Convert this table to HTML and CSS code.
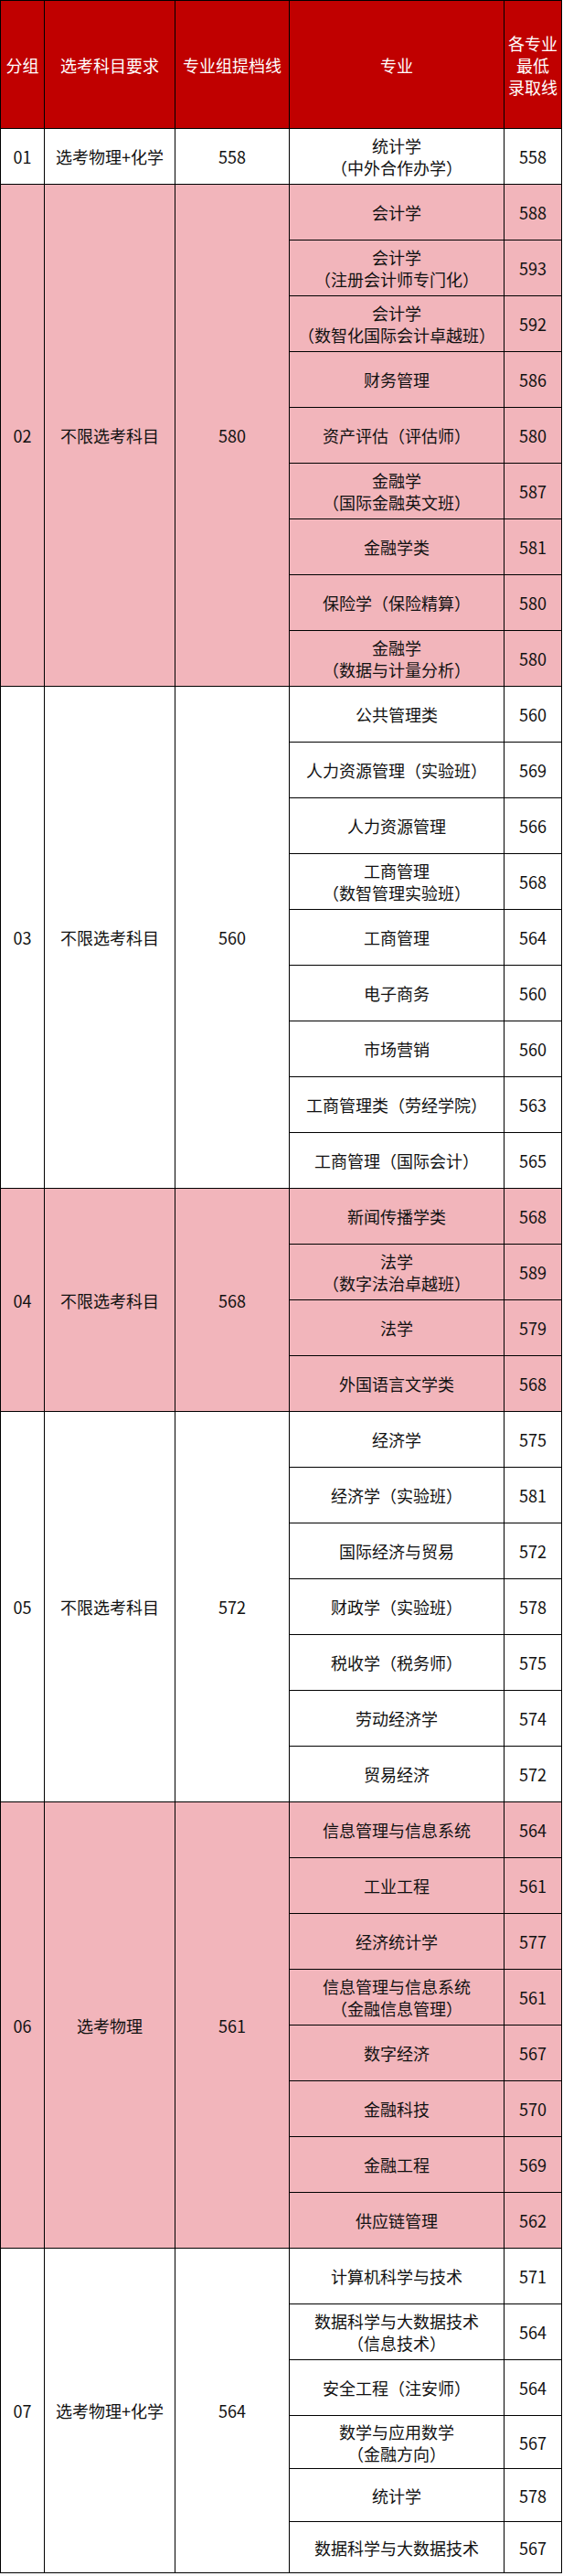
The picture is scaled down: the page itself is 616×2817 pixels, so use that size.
FILE: index.html
```html
<!DOCTYPE html>
<html lang="zh-CN">
<head>
<meta charset="utf-8">
<title>专业组录取线</title>
<link rel="stylesheet" href="styles.css">
</head>
<body>
<table class="score-table">
  <colgroup>
    <col class="c-group">
    <col class="c-req">
    <col class="c-line">
    <col class="c-major">
    <col class="c-min">
  </colgroup>
  <thead>
    <tr class="head-row">
      <th>分组</th>
      <th>选考科目要求</th>
      <th>专业组提档线</th>
      <th>专业</th>
      <th>各专业<br>最低<br>录取线</th>
    </tr>
  </thead>
  <tbody class="g-white">
    <tr><td>01</td><td>选考物理+化学</td><td>558</td><td>统计学<br>（中外合作办学）</td><td>558</td></tr>
  </tbody>
  <tbody class="g-pink">
    <tr><td rowspan="9">02</td><td rowspan="9">不限选考科目</td><td rowspan="9">580</td><td>会计学</td><td>588</td></tr>
    <tr><td>会计学<br>（注册会计师专门化）</td><td>593</td></tr>
    <tr><td>会计学<br>（数智化国际会计卓越班）</td><td>592</td></tr>
    <tr><td>财务管理</td><td>586</td></tr>
    <tr><td>资产评估（评估师）</td><td>580</td></tr>
    <tr><td>金融学<br>（国际金融英文班）</td><td>587</td></tr>
    <tr><td>金融学类</td><td>581</td></tr>
    <tr><td>保险学（保险精算）</td><td>580</td></tr>
    <tr><td>金融学<br>（数据与计量分析）</td><td>580</td></tr>
  </tbody>
  <tbody class="g-white">
    <tr><td rowspan="9">03</td><td rowspan="9">不限选考科目</td><td rowspan="9">560</td><td>公共管理类</td><td>560</td></tr>
    <tr><td>人力资源管理（实验班）</td><td>569</td></tr>
    <tr><td>人力资源管理</td><td>566</td></tr>
    <tr><td>工商管理<br>（数智管理实验班）</td><td>568</td></tr>
    <tr><td>工商管理</td><td>564</td></tr>
    <tr><td>电子商务</td><td>560</td></tr>
    <tr><td>市场营销</td><td>560</td></tr>
    <tr><td>工商管理类（劳经学院）</td><td>563</td></tr>
    <tr><td>工商管理（国际会计）</td><td>565</td></tr>
  </tbody>
  <tbody class="g-pink">
    <tr><td rowspan="4">04</td><td rowspan="4">不限选考科目</td><td rowspan="4">568</td><td>新闻传播学类</td><td>568</td></tr>
    <tr><td>法学<br>（数字法治卓越班）</td><td>589</td></tr>
    <tr><td>法学</td><td>579</td></tr>
    <tr><td>外国语言文学类</td><td>568</td></tr>
  </tbody>
  <tbody class="g-white">
    <tr><td rowspan="7">05</td><td rowspan="7">不限选考科目</td><td rowspan="7">572</td><td>经济学</td><td>575</td></tr>
    <tr><td>经济学（实验班）</td><td>581</td></tr>
    <tr><td>国际经济与贸易</td><td>572</td></tr>
    <tr><td>财政学（实验班）</td><td>578</td></tr>
    <tr><td>税收学（税务师）</td><td>575</td></tr>
    <tr><td>劳动经济学</td><td>574</td></tr>
    <tr><td>贸易经济</td><td>572</td></tr>
  </tbody>
  <tbody class="g-pink">
    <tr><td rowspan="8">06</td><td rowspan="8">选考物理</td><td rowspan="8">561</td><td>信息管理与信息系统</td><td>564</td></tr>
    <tr><td>工业工程</td><td>561</td></tr>
    <tr><td>经济统计学</td><td>577</td></tr>
    <tr><td>信息管理与信息系统<br>（金融信息管理）</td><td>561</td></tr>
    <tr><td>数字经济</td><td>567</td></tr>
    <tr><td>金融科技</td><td>570</td></tr>
    <tr><td>金融工程</td><td>569</td></tr>
    <tr><td>供应链管理</td><td>562</td></tr>
  </tbody>
  <tbody class="g-white last-group">
    <tr><td rowspan="6">07</td><td rowspan="6">选考物理+化学</td><td rowspan="6">564</td><td>计算机科学与技术</td><td>571</td></tr>
    <tr><td>数据科学与大数据技术<br>（信息技术）</td><td>564</td></tr>
    <tr><td>安全工程（注安师）</td><td>564</td></tr>
    <tr class="short"><td>数学与应用数学<br>（金融方向）</td><td>567</td></tr>
    <tr class="short"><td>统计学</td><td>578</td></tr>
    <tr class="shorter"><td>数据科学与大数据技术</td><td>567</td></tr>
  </tbody>
</table>
</body>
</html>
```

FILE: styles.css
```css
html, body {
  margin: 0;
  padding: 0;
  background: #ffffff;
}

.score-table {
  width: 615px;
  table-layout: fixed;
  border-collapse: collapse;
  font-family: "Liberation Sans Narrow", "Noto Sans CJK SC", sans-serif;
  font-size: 18px;
  line-height: 24px;
  color: #111111;
}

.c-group { width: 48px; }
.c-req { width: 143px; }
.c-line { width: 125px; }
.c-major { width: 235px; }
.c-min { width: 63px; }

.score-table th,
.score-table td {
  border: 1px solid #000000;
  padding: 0;
  text-align: center;
  vertical-align: middle;
  white-space: nowrap;
  overflow: hidden;
}

.score-table th {
  background: #c00000;
  color: #ffffff;
  font-weight: normal;
}

.head-row {
  height: 140px;
}

.score-table tbody tr {
  height: 61px;
}

.score-table tbody tr.short {
  height: 58px;
}

.score-table tbody tr.shorter {
  height: 56px;
}

.g-white td {
  background: #ffffff;
}

.g-pink td {
  background: #f2b5bb;
}
```
